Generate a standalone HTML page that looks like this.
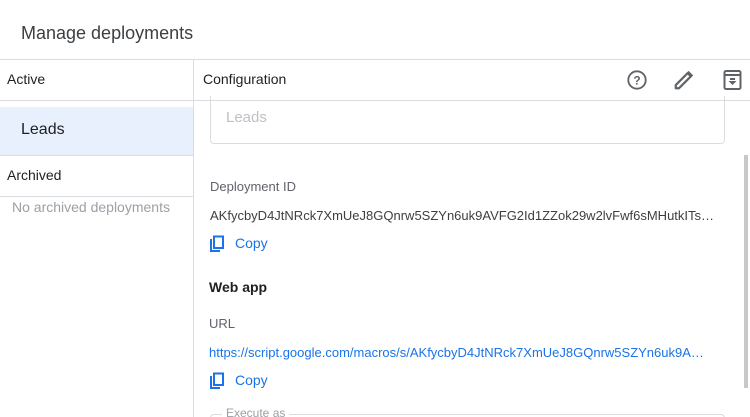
<!DOCTYPE html>
<html><head><style>
*{margin:0;padding:0;box-sizing:border-box}
html,body{width:750px;height:417px;overflow:hidden}
body{background:#fff;font-family:"Liberation Sans",Arial,sans-serif;position:relative;color:#3c4043}
.a{position:absolute;white-space:nowrap}
.hl{position:absolute;height:1px;background:#dadce0}
.vl{position:absolute;width:1px;background:#dadce0}
.copy{color:#1a73e8;font-size:14px}
</style></head><body>
<div class="a" style="left:21px;top:23px;font-size:18px;color:#3c4043">Manage deployments</div>
<div class="hl" style="left:0;top:59px;width:750px"></div>
<div class="vl" style="left:193px;top:59px;height:358px"></div>
<div class="a" style="left:7px;top:71px;font-size:14px;color:#202124">Active</div>
<div class="hl" style="left:0;top:100px;width:750px"></div>
<div class="a" style="left:0;top:107px;width:193px;height:48px;background:#e8f0fe"></div>
<div class="a" style="left:21px;top:121px;font-size:16px;color:#202124">Leads</div>
<div class="hl" style="left:0;top:155px;width:193px"></div>
<div class="a" style="left:7px;top:167px;font-size:14px;color:#202124">Archived</div>
<div class="hl" style="left:0;top:196px;width:193px"></div>
<div class="a" style="left:12px;top:199px;font-size:14px;color:#9aa0a6">No archived deployments</div>

<div class="a" style="left:203px;top:71px;font-size:14px;color:#202124">Configuration</div>
<svg class="a" style="left:626px;top:69px" width="22" height="22" viewBox="0 0 24 24"><circle cx="12" cy="12" r="9.5" fill="none" stroke="#5f6368" stroke-width="2"/><text x="12" y="17" text-anchor="middle" font-size="13" font-weight="bold" fill="#5f6368" font-family="Liberation Sans">?</text></svg>
<svg class="a" style="left:673px;top:69px" width="22" height="22" viewBox="0 0 24 24"><path d="M3 21v-3.5L16 4.5l3.5 3.5L6.5 21z" fill="none" stroke="#5f6368" stroke-width="2.4" stroke-linejoin="round"/><path d="M15 4l2-2 5 5-2 2z" fill="#5f6368"/></svg>
<svg class="a" style="left:723px;top:69px" width="20" height="22" viewBox="0 0 20 22"><rect x="1.5" y="2" width="16" height="18" rx="1.5" fill="none" stroke="#5f6368" stroke-width="2"/><line x1="1.5" y1="6" x2="17.5" y2="6" stroke="#5f6368" stroke-width="2"/><path d="M7 11h5v-2h-5z M5.5 12h8l-4 4z" fill="#5f6368"/></svg>

<div class="a" style="left:210px;top:96px;width:515px;height:48px;border:1px solid #dadce0;border-top:none;border-radius:0 0 4px 4px"></div>
<div class="a" style="left:226px;top:109px;font-size:15px;color:#bdc1c6">Leads</div>
<div class="a" style="left:744px;top:155px;width:4px;height:233px;background:#c8c8c8"></div>

<div class="a" style="left:210px;top:179px;font-size:13px;color:#5f6368">Deployment ID</div>
<div class="a" style="left:210px;top:208px;font-size:13px;color:#3c4043">AKfycbyD4JtNRck7XmUeJ8GQnrw5SZYn6uk9AVFG2Id1ZZok29w2lvFwf6sMHutkITs…</div>
<svg class="a" style="left:209px;top:235px" width="18" height="18" viewBox="0 0 18 18"><path d="M2 4v12h9" fill="none" stroke="#1a73e8" stroke-width="2"/><rect x="5" y="1.5" width="9" height="11.5" fill="none" stroke="#1a73e8" stroke-width="2"/></svg>
<div class="a copy" style="left:235px;top:235px">Copy</div>
<div class="a" style="left:209px;top:279px;font-size:14px;color:#202124;font-weight:bold">Web app</div>
<div class="a" style="left:209px;top:316px;font-size:13px;color:#5f6368">URL</div>
<div class="a" style="left:209px;top:345px;font-size:13px;color:#1a73e8">https://script.google.com/macros/s/AKfycbyD4JtNRck7XmUeJ8GQnrw5SZYn6uk9A…</div>
<svg class="a" style="left:209px;top:372px" width="18" height="18" viewBox="0 0 18 18"><path d="M2 4v12h9" fill="none" stroke="#1a73e8" stroke-width="2"/><rect x="5" y="1.5" width="9" height="11.5" fill="none" stroke="#1a73e8" stroke-width="2"/></svg>
<div class="a copy" style="left:235px;top:372px">Copy</div>
<div class="a" style="left:210px;top:414px;width:515px;height:20px;border:1px solid #dadce0;border-radius:4px"></div>
<div class="a" style="left:222px;top:406px;font-size:12px;color:#9aa0a6;background:#fff;padding:0 4px">Execute as</div>
</body></html>
